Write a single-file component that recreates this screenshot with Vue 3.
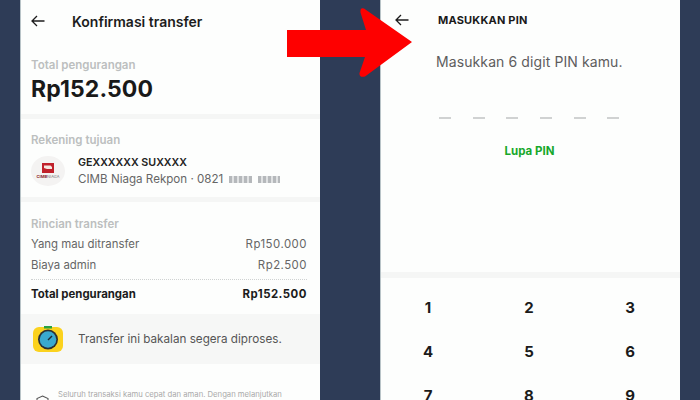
<script setup>
const pinSlots = [1, 2, 3, 4, 5, 6];
const keys = ['1', '2', '3', '4', '5', '6', '7', '8', '9'];
</script>

<template>
  <div class="page">
    <!-- Left phone: transfer confirmation -->
    <section class="phone">
      <header class="top-bar">
        <svg class="back" width="14" height="12" viewBox="0 0 14 12">
          <path d="M13.5 6H1M6 1L1 6l5 5" fill="none" stroke="#1c1c1c" stroke-width="1.3" />
        </svg>
        <h1 class="top-title">Konfirmasi transfer</h1>
      </header>

      <div class="block total-block">
        <div class="label">Total pengurangan</div>
        <div class="amount">Rp152.500</div>
      </div>
      <div class="sep"></div>

      <div class="block account-block">
        <div class="label">Rekening tujuan</div>
        <div class="account">
          <div class="bank-logo">
            <svg width="12" height="10" viewBox="0 0 12 10">
              <rect width="12" height="10" fill="#c0202a" />
              <path d="M2 2.5h6.5l1.5 1.5v2H5L2 5z" fill="#f5e6e0" />
            </svg>
            <span class="bank-name">CIMB<span class="bank-thin">NIAGA</span></span>
          </div>
          <div class="account-text">
            <div class="account-name">GEXXXXXX SUXXXX</div>
            <div class="account-sub">
              CIMB Niaga Rekpon · 0821
              <span class="blur b1"></span><span class="blur b2"></span>
            </div>
          </div>
        </div>
      </div>
      <div class="sep sep-thin"></div>

      <div class="block detail-block">
        <div class="label">Rincian transfer</div>
        <div class="row"><span>Yang mau ditransfer</span><span class="money">Rp150.000</span></div>
        <div class="row"><span>Biaya admin</span><span class="money">Rp2.500</span></div>
        <div class="row row-total"><span>Total pengurangan</span><span class="money">Rp152.500</span></div>
      </div>

      <div class="notice">
        <svg class="timer" width="30" height="26" viewBox="0 0 30 26">
          <rect y="1" width="30" height="25" rx="6" fill="#fbd21e" />
          <rect x="11" y="0" width="8" height="2.5" fill="#27a243" />
          <circle cx="15" cy="13.5" r="10" fill="#2b2f33" />
          <circle cx="15" cy="13.5" r="8.3" fill="#39a9cf" />
          <path d="M15 14l4-4" stroke="#1f2a30" stroke-width="1.4" />
        </svg>
        <span>Transfer ini bakalan segera diproses.</span>
      </div>

      <div class="footnote">
        <svg width="13" height="14" viewBox="0 0 13 14">
          <path d="M6.5 1L12 3.5V9l-5.5 4L1 9V3.5z" fill="none" stroke="#555" stroke-width="1.1" />
          <path d="M4 7l2 2 3-3" fill="none" stroke="#4aa564" stroke-width="1.1" />
        </svg>
        <p>Seluruh transaksi kamu cepat dan aman. Dengan melanjutkan</p>
      </div>
    </section>

    <!-- Right phone: PIN entry -->
    <section class="phone">
      <header class="top-bar pin-bar">
        <svg class="back" width="14" height="12" viewBox="0 0 14 12">
          <path d="M13.5 6H1M6 1L1 6l5 5" fill="none" stroke="#1c1c1c" stroke-width="1.3" />
        </svg>
        <h1 class="pin-title">MASUKKAN PIN</h1>
      </header>

      <div class="pin-body">
        <p class="pin-text">Masukkan 6 digit PIN kamu.</p>
        <div class="pin-dashes">
          <span v-for="slot in pinSlots" :key="slot" class="dash"></span>
        </div>
        <div class="forgot">Lupa PIN</div>
      </div>
      <div class="sep pin-sep"></div>

      <div class="keypad">
        <span v-for="key in keys" :key="key" class="key">{{ key }}</span>
      </div>
    </section>

    <!-- Red arrow lying over both phones -->
    <svg class="arrow" width="126" height="72" viewBox="0 0 126 72">
      <path
        d="M0 25H79L73.500 7.500Q73 2 77 3.500L125 37L78 71.500Q72 73 72.500 68L78 52H0Z"
        fill="#fe0000"
      />
    </svg>
  </div>
</template>

<style scoped>
.page {
  position: relative;
  width: 700px;
  height: 400px;
  overflow: hidden;
  display: flex;
  gap: 60px;
  padding: 0 20px;
  box-sizing: border-box;
  background: #2e3c57;
  font-family: Inter, "Liberation Sans", sans-serif;
}

.phone {
  width: 300px;
  height: 400px;
  flex: none;
  overflow: hidden;
  background: #fdfefd;
  border-left: 1px solid #b9c4c8;
  box-sizing: border-box;
}

.top-bar {
  height: 42px;
  display: flex;
  align-items: center;
  padding-left: 10px;
}

.top-title {
  margin: 0 0 0 27px;
  font-size: 14px;
  font-weight: 600;
  color: #1c1c1c;
}

.block {
  padding: 0 13px 0 10px;
}

.label {
  font-size: 11.500px;
  font-weight: 600;
  line-height: 16px;
  color: #bcbfbf;
}

.total-block {
  padding-top: 15px;
  height: 57px;
}

.amount {
  margin-top: 2px;
  font-size: 23px;
  font-weight: 700;
  line-height: 28px;
  letter-spacing: 0.1px;
  color: #191919;
}

.sep {
  height: 5px;
  background: #f5f6f5;
}

.sep-thin {
  height: 5px;
}

.account-block {
  padding-top: 13px;
  height: 78px;
  box-sizing: border-box;
}

.account {
  margin-top: 5px;
  display: flex;
  align-items: center;
}

.bank-logo {
  width: 34px;
  height: 30px;
  flex: none;
  display: flex;
  flex-direction: column;
  align-items: center;
  justify-content: center;
  gap: 2px;
  border-radius: 50%;
  background: #f4f3f2;
}

.bank-name {
  font-size: 4px;
  font-weight: 700;
  line-height: 4px;
  color: #8a2028;
}

.bank-thin {
  font-weight: 400;
  color: #777;
}

.account-text {
  margin-left: 13px;
  padding-top: 2px;
}

.account-name {
  font-size: 10.700px;
  font-weight: 600;
  line-height: 16px;
  color: #222;
}

.account-sub {
  display: flex;
  align-items: center;
  gap: 3px;
  font-size: 11.600px;
  line-height: 17px;
  color: #666;
}

.blur {
  display: inline-block;
  height: 7px;
  background: repeating-linear-gradient(90deg, #b5b8bb 0 3px, #e0e2e3 3px 5px);
}

.b1 {
  width: 23px;
  margin-left: 3px;
}

.b2 {
  width: 22px;
  margin-left: 3px;
}

.detail-block {
  padding-top: 14px;
  height: 112px;
  box-sizing: border-box;
}

.detail-block .label {
  margin-bottom: 1px;
}

.row {
  display: flex;
  justify-content: space-between;
  align-items: center;
  height: 21px;
  font-size: 11.400px;
  color: #666;
}

.money {
  letter-spacing: 0.5px;
}

.row-total {
  height: 28px;
  margin-top: 4px;
  border-top: 1px dotted #cfd2d2;
  font-weight: 700;
  color: #1b1b1b;
}

.notice {
  height: 50px;
  display: flex;
  align-items: center;
  gap: 15px;
  padding-left: 12px;
  background: #f6f7f6;
  font-size: 11.700px;
  color: #555;
}

.timer {
  flex: none;
}

.footnote {
  margin-top: 26px;
  display: flex;
  gap: 9px;
  padding-left: 15px;
}

.footnote svg {
  flex: none;
  margin-top: 5px;
}

.footnote p {
  margin: 0;
  font-size: 7.700px;
  line-height: 10px;
  white-space: nowrap;
  color: #aaa;
}

.pin-bar {
  height: 40px;
  padding-left: 14px;
}

.pin-title {
  margin: 0 0 0 29px;
  font-size: 11px;
  font-weight: 700;
  letter-spacing: 0.2px;
  color: #1a1a1a;
}

.pin-body {
  height: 232px;
  box-sizing: border-box;
  padding-top: 13px;
}

.pin-text {
  margin: 0 0 0 55px;
  font-size: 14px;
  line-height: 18px;
  letter-spacing: 0.1px;
  color: #5d5d5d;
}

.pin-dashes {
  margin: 46px 0 0 58px;
  display: flex;
  gap: 21.700px;
}

.dash {
  width: 12px;
  height: 2px;
  background: #d0d2d2;
}

.forgot {
  margin-top: 25px;
  padding-right: 2px;
  text-align: center;
  font-size: 11.500px;
  font-weight: 700;
  line-height: 14px;
  color: #17a82b;
}

.pin-sep {
  height: 6px;
}

.keypad {
  padding: 7px 3px 0 0;
  display: grid;
  grid-template-columns: repeat(3, 101px);
  grid-auto-rows: 44px;
  justify-content: center;
  justify-items: center;
  align-items: center;
  font-size: 15px;
  font-weight: 700;
  color: #1b1b1b;
}

.arrow {
  position: absolute;
  left: 287px;
  top: 5px;
}
</style>

<style>
html,
body {
  margin: 0;
  background: #2e3c57;
}
</style>
